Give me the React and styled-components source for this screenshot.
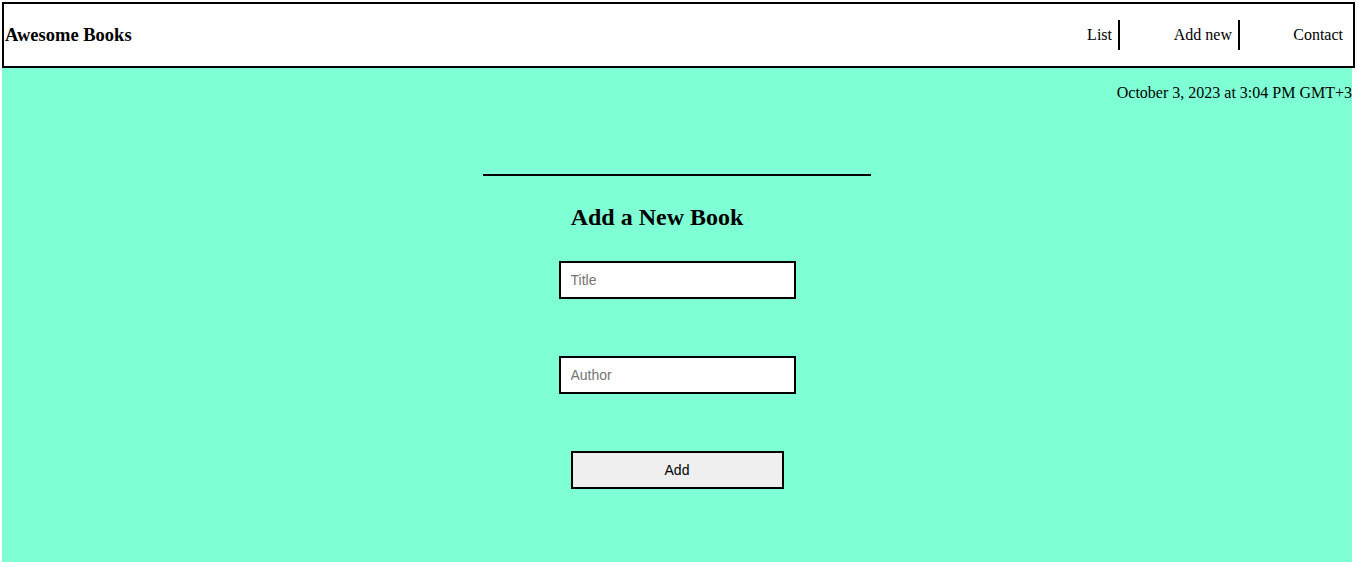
import React from 'react';
import styled, { createGlobalStyle } from 'styled-components';

const GlobalStyle = createGlobalStyle`
  html, body {
    margin: 0;
    padding: 0;
    background: #fff;
  }
  body {
    padding: 2px 0 0 2px;
    font-family: "Liberation Serif", "Times New Roman", serif;
  }
`;

const Page = styled.div`
  width: 1350px;
  min-height: 560px;
  background: #7fffd4;
`;

const Header = styled.header`
  width: 1353px;
  height: 66px;
  box-sizing: border-box;
  border: 2px solid #000;
  background: #fff;
  display: flex;
  align-items: center;
  justify-content: space-between;
`;

const Brand = styled.h1`
  margin: 0 0 0 1px;
  font-size: 18.5px;
  font-weight: bold;
`;

const NavList = styled.ul`
  list-style: none;
  margin: 0;
  padding: 0;
  display: flex;
`;

const NavItem = styled.li`
  width: ${(p) => (p.$last ? '113px' : '120px')};
  box-sizing: border-box;
  height: 30px;
  line-height: 30px;
  text-align: right;
  padding-right: ${(p) => (p.$last ? '10px' : '6px')};
  border-right: ${(p) => (p.$last ? 'none' : '2px solid #000')};
  font-size: 16px;
  cursor: pointer;
`;

const DateLine = styled.p`
  margin: 0;
  padding: 16px 0 0;
  text-align: right;
  font-size: 16px;
  line-height: 18px;
`;

const Section = styled.section`
  display: flex;
  flex-direction: column;
  align-items: center;
  padding-top: 72px;
`;

const Rule = styled.hr`
  width: 388px;
  margin: 0;
  border: none;
  border-top: 2px solid #000;
`;

const Heading = styled.h2`
  margin: 27px 40px 0 0;
  font-size: 24px;
  line-height: 28px;
`;

const Form = styled.form`
  display: flex;
  flex-direction: column;
  align-items: center;
  gap: 57px;
  margin-top: 30px;
`;

const Field = styled.input`
  width: 237px;
  height: 38px;
  box-sizing: border-box;
  border: 2px solid #000;
  background: #fff;
  padding: 0 10px;
  font-family: "Liberation Sans", Arial, sans-serif;
  font-size: 14px;
  outline: none;
  &::placeholder {
    color: #757575;
  }
`;

const AddButton = styled.button`
  width: 213px;
  height: 38px;
  box-sizing: border-box;
  border: 2px solid #000;
  background: #efefef;
  font-family: "Liberation Sans", Arial, sans-serif;
  font-size: 14px;
  color: #000;
`;

export default function App() {
  return (
    <>
      <GlobalStyle />
      <Page>
        <Header>
          <Brand>Awesome Books</Brand>
          <nav>
            <NavList>
              <NavItem>List</NavItem>
              <NavItem>Add new</NavItem>
              <NavItem $last>Contact</NavItem>
            </NavList>
          </nav>
        </Header>
        <DateLine>October 3, 2023 at 3:04 PM GMT+3</DateLine>
        <Section>
          <Rule />
          <Heading>Add a New Book</Heading>
          <Form onSubmit={(e) => e.preventDefault()}>
            <Field type="text" placeholder="Title" />
            <Field type="text" placeholder="Author" />
            <AddButton type="submit">Add</AddButton>
          </Form>
        </Section>
      </Page>
    </>
  );
}
